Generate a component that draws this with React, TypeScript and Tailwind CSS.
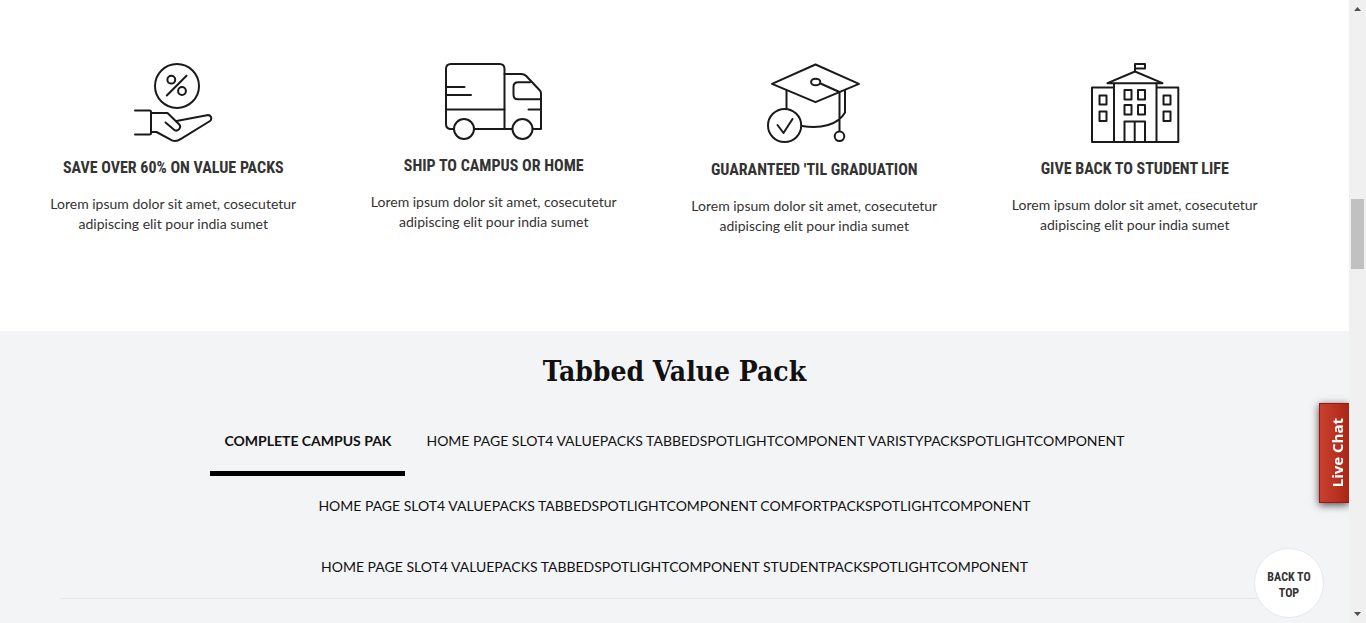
import { useState, type ReactNode } from "react";

const condensed = "font-['Roboto_Condensed','Liberation_Sans_Narrow',sans-serif]";

function Icon({ label, className, viewBox, children }: { label: string; className: string; viewBox: string; children: ReactNode }) {
  return (
    <svg
      role="img"
      aria-label={label}
      className={className}
      viewBox={viewBox}
      fill="none"
      stroke="#1a1a1a"
      strokeWidth="2"
      strokeLinecap="round"
      strokeLinejoin="round"
    >
      {children}
    </svg>
  );
}

function SaveIcon() {
  return (
    <Icon label="Savings" className="h-[79px] w-20" viewBox="133 63 80 79">
      <circle cx="177" cy="86" r="22" />
      <circle cx="171.300" cy="79.700" r="3.900" />
      <circle cx="182" cy="91" r="3.900" />
      <path d="M186.500 75.800 166.800 95.500" />
      <path d="M135 110.500h14.500q1.500 0 1.500 1.500v21q0 1.500-1.500 1.500H135" />
      <path d="M151 113h16.500l11.800 11.500c2.500 3-1 7-4.300 5.900L165.500 122.500" />
      <path d="M176.500 121l30.500-5.800c4-.6 5.500 3.500 3 5.800l-29 17.800q-5 3.300-9 1.500L156.500 132H151" />
    </Icon>
  );
}

function TruckIcon() {
  return (
    <Icon label="Shipping" className="h-[77px] w-[98px]" viewBox="445 63 98 77">
      <path d="M454 129h-3q-5 0-5-5V69q0-5 5-5h48.500q5 0 5 5v60" />
      <path d="M474 129h38M533 129h8V93.500q0-2-1.300-3.300L526 75.800q-2-1.800-4.500-1.800h-17" />
      <path d="M530 82.300h-12q-4.500 0-4.500 4.500v8q0 4.500 4.500 4.500h23M541 109.600h-12.500M446 109.600h58.500M446 87h18.500M446 95h25" />
      <circle cx="464" cy="129" r="10" />
      <circle cx="522.500" cy="129" r="10" />
    </Icon>
  );
}

function GraduationIcon() {
  return (
    <Icon label="Graduation" className="h-[81px] w-[94px]" viewBox="767 63 94 81">
      <path d="M815.500 64.500 772 83.800l43.500 18.400L859 83.800Z" />
      <ellipse cx="815.700" cy="82" rx="4.600" ry="3.300" />
      <path d="M820.500 83.500l19 8.500v39M786.500 90.500v18M845 90.500v22c-7 12.500-24 16.500-43 13.500" />
      <circle cx="784.600" cy="125.500" r="16.600" />
      <path d="M777.500 125l6 8 9-14" />
      <circle cx="839.500" cy="136.300" r="4.800" />
    </Icon>
  );
}

function CampusIcon() {
  return (
    <Icon label="Campus" className="h-20 w-[90px]" viewBox="1090 63 90 80">
      <path d="M1135 71.500V64h10v4.500h-10M1107.500 83.200l27.500-11.700 27.500 11.700Z" />
      <path d="M1114 87.500h-22V142h86.300V87.500h-21.800M1114 83.500V142M1156.500 83.500V142M1124.500 142v-20.500h20.500V142M1134.700 121.500V142" />
      <path d="M1124.500 90h7v9.500h-7ZM1138 90h7v9.500h-7ZM1124.500 105h7v9.500h-7ZM1138 105h7v9.500h-7ZM1099.500 95.500h7v9h-7ZM1099.500 111.500h7v9.500h-7ZM1163.500 95.500h7v9h-7ZM1163.500 111.500h7v9.500h-7Z" />
    </Icon>
  );
}

const features = [
  { title: "SAVE OVER 60% ON VALUE PACKS", icon: <SaveIcon /> },
  { title: "SHIP TO CAMPUS OR HOME", icon: <TruckIcon /> },
  { title: "GUARANTEED 'TIL GRADUATION", icon: <GraduationIcon /> },
  { title: "GIVE BACK TO STUDENT LIFE", icon: <CampusIcon /> },
];

const tabs = [
  "COMPLETE CAMPUS PAK",
  "HOME PAGE SLOT4 VALUEPACKS TABBEDSPOTLIGHTCOMPONENT VARISTYPACKSPOTLIGHTCOMPONENT",
  "HOME PAGE SLOT4 VALUEPACKS TABBEDSPOTLIGHTCOMPONENT COMFORTPACKSPOTLIGHTCOMPONENT",
  "HOME PAGE SLOT4 VALUEPACKS TABBEDSPOTLIGHTCOMPONENT STUDENTPACKSPOTLIGHTCOMPONENT",
];

export default function App() {
  const [active, setActive] = useState(0);

  return (
    <div className="flex min-h-screen bg-white font-['Lato',sans-serif] text-[#333]">
      <main className="flex min-w-0 flex-1 flex-col">
        <section className="grid grid-cols-4 pt-[63px] pr-[54px] pb-[95px] pl-[13px]">
          {features.map((f) => (
            <article key={f.title} className="flex flex-col items-center text-center">
              {f.icon}
              <h3 className={`mt-4 text-base leading-5 font-bold ${condensed}`}>{f.title}</h3>
              <p className="mt-4 max-w-[260px] text-sm leading-5">
                Lorem ipsum dolor sit amet, cosecutetur adipiscing elit pour india sumet
              </p>
            </article>
          ))}
        </section>

        <section className="flex-1 bg-[#f3f4f6] px-[60px] pt-[21px] text-[#111]">
          <h2 className="text-center font-['Roboto_Slab','DejaVu_Serif_Condensed','DejaVu_Serif',serif] text-[28px] leading-10 font-bold">
            Tabbed Value Pack
          </h2>
          <div role="tablist" className="mt-[19px] flex flex-wrap items-start justify-center gap-x-[7px] border-b border-[#e5e7e9]">
            {tabs.map((tab, i) => (
              <button
                key={tab}
                role="tab"
                aria-selected={i === active}
                onClick={() => setActive(i)}
                className={`px-3.5 pt-5 text-sm leading-5 ${i === active ? "border-b-[5px] border-black pb-5 font-bold" : "pb-[21px]"}`}
              >
                {tab}
              </button>
            ))}
          </div>
        </section>
      </main>

      <button className="fixed right-[17px] top-[403px] flex h-[100px] w-[30px] items-center justify-center border border-r-0 border-[#a01408] bg-linear-to-r from-[#c9402f] to-[#ab2515] pl-1 shadow-[0_2px_8px_rgba(0,0,0,0.7)] [clip-path:inset(-16px_0_-16px_-16px)]">
        <span className="rotate-180 font-['Open_Sans',sans-serif] text-[15px] leading-5 font-bold text-white [writing-mode:vertical-rl]">
          Live Chat
        </span>
      </button>

      <a
        href="#top"
        className={`fixed right-[42px] bottom-[5px] flex size-[70px] items-center justify-center rounded-full border border-[#e5e7e9] bg-white pt-1 text-center text-xs leading-4 font-bold ${condensed}`}
      >
        BACK TO
        <br />
        TOP
      </a>

      <aside aria-hidden="true" className="sticky top-0 flex h-screen w-[17px] shrink-0 flex-col items-center bg-[#f0f0f0]">
        <svg className="h-[17px] w-[17px]" viewBox="0 0 17 17" fill="#505050">
          <path d="M5 11h7L8.500 7Z" />
        </svg>
        <div className="mt-[182px] h-[70px] w-[13px] bg-[#c1c1c1]" />
        <svg className="mt-auto h-[17px] w-[17px]" viewBox="0 0 17 17" fill="#505050">
          <path d="M5 6h7l-3.500 4Z" />
        </svg>
      </aside>
    </div>
  );
}
